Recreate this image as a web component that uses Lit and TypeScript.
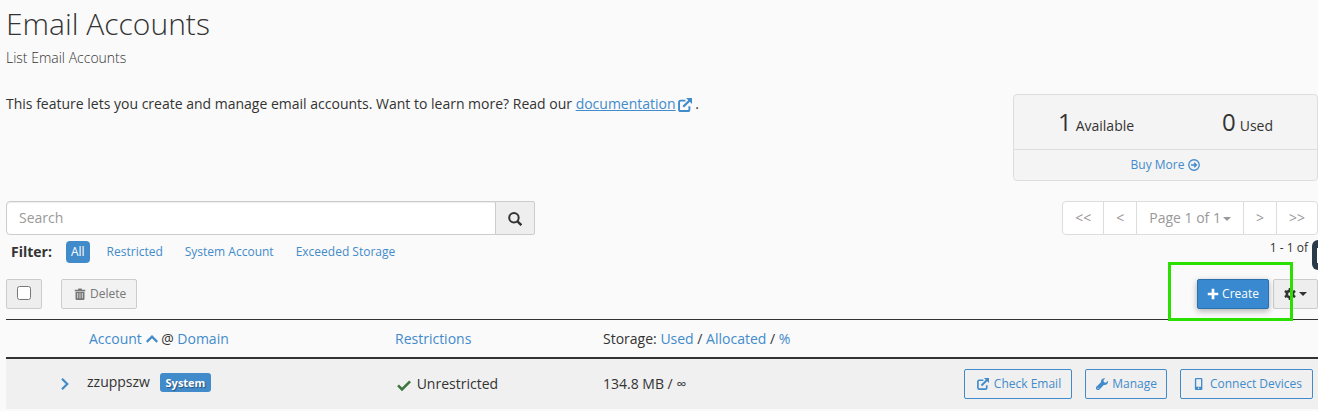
import { LitElement, html, css, svg } from "lit";
import { customElement } from "lit/decorators.js";

const external = svg`<path d="M8.500 3H3Q1.200 3 1.200 4.800V13Q1.200 14.800 3 14.800H11.200Q13 14.800 13 13V9.500" fill="none" stroke="currentColor" stroke-width="2.200"/><path d="M6 10L13.500 2.500" stroke="currentColor" stroke-width="2.600"/><path d="M9.200 0H16V6.800z" fill="currentColor"/>`;

const icons = {
  external,
  arrowCircle: svg`<circle cx="8" cy="8" r="7" fill="none" stroke="currentColor" stroke-width="1.700"/><path d="M4 8h7M8.200 5l3 3-3 3" fill="none" stroke="currentColor" stroke-width="1.900"/>`,
  search: svg`<circle cx="6.800" cy="6.600" r="5.400" fill="none" stroke="currentColor" stroke-width="2.300"/><path d="M10.500 10.500l4.800 4.600" stroke="currentColor" stroke-width="2.800"/>`,
  trash: svg`<path d="M1 2.200h4L6 .8h4l1 1.400h4v2H1z" fill="currentColor"/><path fill-rule="evenodd" d="M2 5h12v9.500q0 1.500-1.500 1.500h-9Q2 16 2 14.500zM4.500 6.800v7h1v-7zM7.500 6.800v7h1v-7zM10.500 6.800v7h1v-7z" fill="currentColor"/>`,
  plus: svg`<path d="M8 1v14M1 8h14" stroke="currentColor" stroke-width="3.600"/>`,
  gear: svg`<circle cx="8" cy="8" r="4.200" fill="none" stroke="currentColor" stroke-width="3.400"/><path d="M8 0v3M8 13v3M1.100 4l2.600 1.500M12.300 10.500l2.600 1.500M1.100 12l2.600-1.500M12.300 5.500L14.900 4" stroke="currentColor" stroke-width="3.400"/>`,
  up: svg`<path d="M1 11.800L8 4.800l7 7" fill="none" stroke="currentColor" stroke-width="3"/>`,
  right: svg`<path d="M4 1l7 7-7 7" fill="none" stroke="currentColor" stroke-width="3"/>`,
  check: svg`<path d="M1.200 8.500l4.500 4.500L15 3.800" fill="none" stroke="currentColor" stroke-width="3"/>`,
  wrench: svg`<path d="M15.800 3.700l-2.700 2.500-2.400-.7-.8-2.500L12.400.4C9.300-.5 6.100 1.900 6.600 5.600L.7 11.400a2.700 2.700 0 0 0 3.900 3.900l5.800-5.900c3.600.6 6.300-2.200 5.400-5.700zM2.700 14.200a.8.8 0 1 1 0-1.600.8.8 0 0 1 0 1.600z" fill="currentColor" fill-rule="evenodd"/>`,
  phone: svg`<path fill-rule="evenodd" d="M4 0h7Q12.500 0 12.500 1.500v13q0 1.500-1.500 1.500h-7Q2.500 16 2.500 14.500v-13Q2.500 0 4 0zM4.300 1.600v10h6.400v-10zM7.500 12.800a1 1 0 1 0 0 2 1 1 0 0 0 0-2z" fill="currentColor"/>`,
};

const icon = (name: keyof typeof icons, size = "") =>
  html`<svg class="icon ${size}" viewBox="0 0 16 16" aria-hidden="true">${icons[name]}</svg>`;

@customElement("app-root")
export class AppRoot extends LitElement {
  static styles = css`
    :host {
      display: block;
      position: relative;
      min-height: 100vh;
      box-sizing: border-box;
      padding-left: 6px;
      overflow: hidden;
      background: #fafafa;
      color: #333;
      font: 14px/20px "Open Sans", sans-serif;
    }
    * { box-sizing: border-box; }
    a { color: #428bca; text-decoration: none; }
    button, input { font: inherit; color: inherit; margin: 0; }
    .icon { width: 12px; height: 12px; flex: none; vertical-align: -1px; }
    .icon.mid { width: 14px; height: 14px; vertical-align: -3px; }
    h1 { margin: 0; padding-top: 6px; font-size: 30px; line-height: 36px; font-weight: 300; }
    .subtitle { margin: 6px 0 26px; font-weight: 300; }
    .intro { display: flex; justify-content: space-between; align-items: flex-start; gap: 24px; }
    .intro p { margin: 0; }
    .doc { text-decoration: underline; }
    .doc-icon { margin-left: 2px; }
    .stats { flex: 0 0 305px; border: 1px solid #ddd; border-radius: 4px; background: #f4f4f4; }
    .counts { display: flex; justify-content: space-around; padding: 10px 0; }
    .count { display: flex; align-items: baseline; gap: 4px; font-size: 24px; line-height: 34px; }
    .count span { font-size: 14px; line-height: 20px; }
    .buy { display: flex; justify-content: center; align-items: center; gap: 4px; height: 31px; border-top: 1px solid #ddd; font-size: 12px; }
    .tools { display: flex; justify-content: space-between; margin-top: 20px; }
    .search { display: flex; flex: 0 1 529px; height: 34px; }
    .search input { flex: 1; min-width: 0; padding: 6px 12px; border: 1px solid #ccc; border-radius: 4px 0 0 4px; background: #fff; box-shadow: inset 0 1px 1px rgba(0, 0, 0, 0.075); }
    .search input::placeholder { color: #999; opacity: 1; }
    .search button { width: 40px; padding: 0; margin-left: -1px; border: 1px solid #ccc; border-radius: 0 2px 2px 0; background: #eee; }
    .pager { display: flex; height: 34px; border: 1px solid #ddd; border-radius: 4px; background: #fff; overflow: hidden; }
    .pager button { padding: 0 12px; border: 0; background: none; color: #999; }
    .pager button + button { border-left: 1px solid #ddd; }
    .pager .caret { margin-left: 2px; }
    .caret { display: inline-block; border: 4px solid transparent; border-top-color: currentColor; border-bottom: 0; vertical-align: middle; }
    .filters { display: flex; justify-content: space-between; align-items: flex-start; padding-top: 6px; }
    .filter-list { display: flex; align-items: center; gap: 12px; padding-left: 5px; font-size: 12px; line-height: 22px; }
    .filter-list b { font-size: 14px; margin-right: 2px; }
    .filter-list a { padding: 0 5px; border-radius: 4px; }
    .filter-list .active { background: #428bca; color: #fff; }
    .range { padding-right: 10px; font-size: 12px; line-height: 13px; }
    .actions { display: flex; gap: 19px; padding: 16px 0 10px; font-size: 12px; }
    .btn { display: inline-flex; align-items: center; justify-content: center; gap: 5px; height: 30px; padding: 0 10px 0 12px; border: 1px solid #ccc; border-radius: 2px; background: #eee; font-size: 12px; line-height: 18px; white-space: nowrap; }
    .select-all { width: 36px; padding: 0; }
    .select-all input { width: 14px; height: 14px; margin: 0 0 2px; }
    .delete { gap: 4px; background: #f2f2f2; color: #777; }
    .right { display: flex; gap: 4px; margin-left: auto; }
    .create-wrap { position: relative; }
    .create-wrap::after { content: ""; position: absolute; inset: -17px -24px -12px -29px; border: 3px solid #2be000; pointer-events: none; z-index: 1; }
    .create { padding: 0 9px; gap: 3px; background: #3889cf; border-color: #2a6fae; color: #fff; box-shadow: 0 2px 6px rgba(0, 0, 0, 0.3); }
    .settings { width: 45px; padding: 0; gap: 3px; }
    table { width: 100%; table-layout: fixed; border-collapse: separate; border-spacing: 0; }
    .c-expand { width: 78px; }
    .c-account { width: 306px; }
    .c-limit { width: 208px; }
    th, td { padding: 0 5px; text-align: left; font-weight: 400; white-space: nowrap; }
    th { height: 40px; border-top: 1px solid #333; border-bottom: 2px solid #333; }
    td { height: 50px; background: #f0f0f0; }
    .expand { display: block; margin-left: auto; padding: 0; border: 0; background: none; color: #428bca; }
    td.expand-cell { padding-right: 13px; }
    .name { padding: 0 0 4px 3px; }
    .badge { display: inline-block; margin-left: 6px; padding: 0 6px; border-radius: 3px; background: #428bca; color: #fff; font-size: 11px; line-height: 19px; font-weight: 700; text-shadow: 1px 1px 1px rgba(0, 0, 0, 0.4); }
    .ok { color: #3c763d; margin: 0 2px; }
    .row-actions { display: flex; justify-content: flex-end; gap: 13px; }
    .outline { border-color: #428bca; background: none; color: #428bca; }
    .compact { padding: 0 9px 0 10px; gap: 4px; }
    .chat { position: absolute; top: 240px; right: -24px; width: 30px; height: 30px; padding: 0; border: 0; border-radius: 6px; background: #293a4a; }
    .chat span { display: block; width: 16px; height: 15px; margin-left: 5px; border: 1px solid #fff; }
  `;

  render() {
    return html`
      <header>
        <h1>Email Accounts</h1>
        <div class="subtitle">List Email Accounts</div>
      </header>
      <section class="intro">
        <p>This feature lets you create and manage email accounts. Want to learn more? Read our
          <a href="#"><span class="doc">documentation</span><span class="doc-icon">${icon("external", "mid")}</span></a> .</p>
        <aside class="stats">
          <div class="counts">
            <div class="count">1 <span>Available</span></div>
            <div class="count">0 <span>Used</span></div>
          </div>
          <a class="buy" href="#">Buy More ${icon("arrowCircle")}</a>
        </aside>
      </section>
      <section class="tools">
        <form class="search" role="search" @submit=${(e: Event) => e.preventDefault()}>
          <input type="text" placeholder="Search" aria-label="Search" />
          <button aria-label="Search">${icon("search", "mid")}</button>
        </form>
        <nav class="pager" aria-label="Pages">
          <button>&lt;&lt;</button><button>&lt;</button><button>Page 1 of 1<span class="caret"></span></button><button>&gt;</button><button>&gt;&gt;</button>
        </nav>
      </section>
      <section class="filters">
        <nav class="filter-list">
          <b>Filter:</b>
          <a class="active" href="#">All</a>
          <a href="#">Restricted</a>
          <a href="#">System Account</a>
          <a href="#">Exceeded Storage</a>
        </nav>
        <div class="range">1 - 1 of</div>
      </section>
      <section class="actions">
        <label class="btn select-all"><input type="checkbox" aria-label="Select all" /></label>
        <button class="btn delete">${icon("trash")}Delete</button>
        <div class="right">
          <div class="create-wrap"><button class="btn create">${icon("plus")}Create</button></div>
          <button class="btn settings" aria-label="Settings">${icon("gear")}<span class="caret"></span></button>
        </div>
      </section>
      <table>
        <colgroup><col class="c-expand" /><col class="c-account" /><col class="c-limit" /><col class="c-limit" /><col /></colgroup>
        <thead>
          <tr>
            <th></th>
            <th><a href="#">Account ${icon("up")}</a> @ <a href="#">Domain</a></th>
            <th><a href="#">Restrictions</a></th>
            <th>Storage: <a href="#">Used</a> / <a href="#">Allocated</a> / <a href="#">%</a></th>
            <th></th>
          </tr>
        </thead>
        <tbody>
          <tr>
            <td class="expand-cell"><button class="expand" aria-label="Expand">${icon("right")}</button></td>
            <td class="name">zzuppszw <span class="badge">System</span></td>
            <td><span class="ok">${icon("check", "mid")}</span> Unrestricted</td>
            <td>134.8 MB / ∞</td>
            <td>
              <div class="row-actions">
                <button class="btn outline">${icon("external")}Check Email</button>
                <button class="btn outline compact">${icon("wrench")}Manage</button>
                <button class="btn outline">${icon("phone")}Connect Devices</button>
              </div>
            </td>
          </tr>
        </tbody>
      </table>
      <button class="chat" aria-label="Chat"><span></span></button>
    `;
  }
}
